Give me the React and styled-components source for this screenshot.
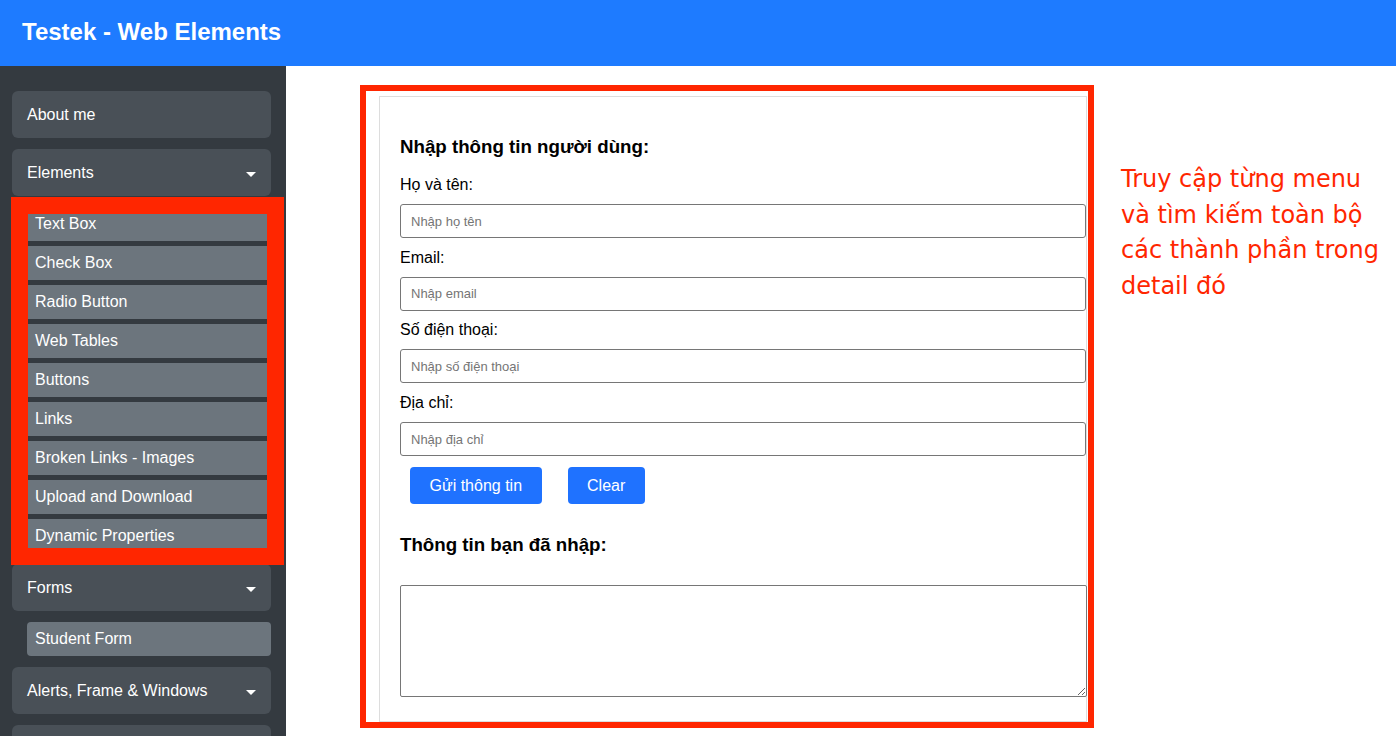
import React from 'react';
import styled, { createGlobalStyle } from 'styled-components';

const GlobalStyle = createGlobalStyle`
  html, body {
    margin: 0;
    padding: 0;
    height: 100%;
    overflow: hidden;
    background: #fff;
    font-family: "Liberation Sans", Arial, sans-serif;
  }
  * {
    box-sizing: border-box;
  }
`;

const Header = styled.header`
  height: 66px;
  background: #1e7bff;
  display: flex;
  align-items: center;
  padding-left: 22px;
`;

const Brand = styled.h1`
  margin: 0 0 2px;
  font-size: 24px;
  font-weight: 700;
  color: #fff;
`;

const Body = styled.div`
  display: flex;
  height: calc(100vh - 66px);
`;

const Sidebar = styled.nav`
  position: relative;
  width: 286px;
  flex-shrink: 0;
  background: #343a40;
  padding: 25px 15px 0 12px;
  overflow: hidden;
`;

const MenuButton = styled.div`
  height: 47px;
  margin-bottom: 11px;
  padding: 0 15px;
  border-radius: 6px;
  background: #495057;
  color: #fff;
  font-size: 16px;
  display: flex;
  align-items: center;
  justify-content: space-between;
`;

const Caret = styled.span`
  width: 0;
  height: 0;
  border-left: 5px solid transparent;
  border-right: 5px solid transparent;
  border-top: 5px solid #fff;
  margin-top: 3px;
`;

const SubMenu = styled.div`
  margin: 0 0 11px 15px;
  display: flex;
  flex-direction: column;
  gap: 5px;
`;

const SubItem = styled.div`
  height: 34px;
  padding-left: 8px;
  border-radius: ${(p) => (p.$square ? '0' : '4px')};
  background: #6c757d;
  color: #fff;
  font-size: 16px;
  display: flex;
  align-items: center;
`;

// annotation frames drawn on top of the screenshot
const SideMark = styled.div`
  position: absolute;
  left: 11px;
  top: 131px;
  width: 273px;
  height: 368px;
  border: 17px solid #ff2600;
  pointer-events: none;
`;

const Main = styled.main`
  flex: 1;
  display: flex;
  align-items: flex-start;
`;

const CardWrap = styled.div`
  position: relative;
  margin: 30px 0 0 93px;
`;

const CardMark = styled.div`
  position: absolute;
  left: -19px;
  top: -11px;
  width: 734px;
  height: 643px;
  border: 6px solid #ff2600;
  pointer-events: none;
`;

const Card = styled.section`
  width: 708px;
  height: 626px;
  border: 1px solid #ddd;
  padding: 39px 0 0 20px;
`;

const Title = styled.h3`
  margin: 0 0 18px;
  font-size: 18.72px;
  line-height: 22px;
  font-weight: 700;
  color: #000;
`;

const Field = styled.div`
  margin-bottom: 10.7px;
`;

const Label = styled.label`
  display: block;
  font-size: 16px;
  line-height: 18px;
  color: #000;
  margin-bottom: 10px;
`;

const Input = styled.input`
  display: block;
  width: 686px;
  height: 34px;
  padding: 0 10px;
  border: 1px solid #767676;
  border-radius: 3px;
  font-family: "Liberation Sans", Arial, sans-serif;
  font-size: 13px;
  color: #000;
  &::placeholder {
    color: #757575;
  }
`;

const Actions = styled.div`
  display: flex;
  gap: 26px;
  margin: 11px 0 30px 10px;
`;

const Button = styled.button`
  height: 37px;
  padding: 0 19.5px;
  border: none;
  border-radius: 4px;
  background: #1f72ff;
  color: #fff;
  font-family: "Liberation Sans", Arial, sans-serif;
  font-size: 16px;
`;

const Output = styled.textarea`
  display: block;
  width: 687px;
  height: 112px;
  margin-top: 29px;
  border: 1px solid #767676;
  border-radius: 2px;
`;

const Note = styled.p`
  margin: 96px 0 0 34px;
  color: #ff2600;
  font-family: "DejaVu Sans", Verdana, sans-serif;
  font-size: 24px;
  line-height: 35.7px;
  white-space: nowrap;
`;

const elements = [
  'Text Box',
  'Check Box',
  'Radio Button',
  'Web Tables',
  'Buttons',
  'Links',
  'Broken Links - Images',
  'Upload and Download',
  'Dynamic Properties',
];

const fields = [
  { label: 'Họ và tên:', placeholder: 'Nhập họ tên' },
  { label: 'Email:', placeholder: 'Nhập email' },
  { label: 'Số điện thoại:', placeholder: 'Nhập số điện thoại' },
  { label: 'Địa chỉ:', placeholder: 'Nhập địa chỉ' },
];

function App() {
  return (
    <>
      <GlobalStyle />
      <Header>
        <Brand>Testek - Web Elements</Brand>
      </Header>
      <Body>
        <Sidebar>
          <MenuButton>About me</MenuButton>
          <MenuButton>
            Elements
            <Caret />
          </MenuButton>
          <SubMenu>
            {elements.map((name) => (
              <SubItem key={name} $square>{name}</SubItem>
            ))}
          </SubMenu>
          <MenuButton>
            Forms
            <Caret />
          </MenuButton>
          <SubMenu>
            <SubItem>Student Form</SubItem>
          </SubMenu>
          <MenuButton>
            Alerts, Frame &amp; Windows
            <Caret />
          </MenuButton>
          <MenuButton />
          <SideMark />
        </Sidebar>
        <Main>
          <CardWrap>
            <Card>
              <Title>Nhập thông tin người dùng:</Title>
              {fields.map((f) => (
                <Field key={f.label}>
                  <Label>{f.label}</Label>
                  <Input placeholder={f.placeholder} />
                </Field>
              ))}
              <Actions>
                <Button type="submit">Gửi thông tin</Button>
                <Button type="button">Clear</Button>
              </Actions>
              <Title>Thông tin bạn đã nhập:</Title>
              <Output />
            </Card>
            <CardMark />
          </CardWrap>
          <Note>
            Truy cập từng menu
            <br />
            và tìm kiếm toàn bộ
            <br />
            các thành phần trong
            <br />
            detail đó
          </Note>
        </Main>
      </Body>
    </>
  );
}

export default App;
